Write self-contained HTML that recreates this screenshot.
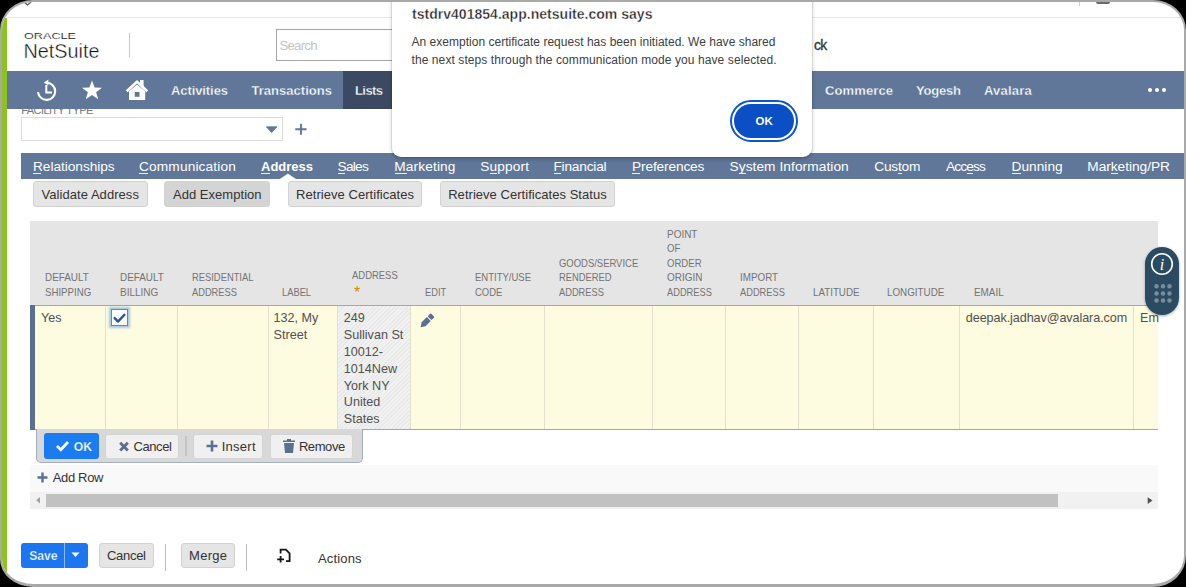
<!DOCTYPE html><html><head><meta charset="utf-8"><style>
html,body{margin:0;padding:0;background:#000;width:1186px;height:587px;overflow:hidden}
.frame{position:absolute;left:0;top:0;width:1186px;height:587px;box-sizing:border-box;border:2px solid #a9a9a9;border-right-width:2.5px;border-bottom-width:3px;border-radius:33px 33px 33px 33px / 30px 30px 31px 28px;background:#fff;overflow:hidden}
.in{position:absolute;left:-2px;top:-2px;width:1186px;height:587px}
.t{position:absolute;white-space:nowrap;line-height:1;font-family:"Liberation Sans",sans-serif}
</style></head><body><div class="frame"><div class="in">
<div style="position:absolute;left:2px;top:18px;width:5px;height:560px;background:#8dc21f"></div>
<div style="position:absolute;left:7px;top:17px;width:1180px;height:1px;background:#e8e8e8"></div>
<svg style="position:absolute;left:0;top:0" width="200" height="70"><text x="24" y="38.9" font-family="Liberation Sans" font-size="9.6" textLength="52" lengthAdjust="spacingAndGlyphs" fill="#222" stroke="#fff" stroke-width="0.12">ORACLE</text><text x="23.5" y="58" font-family="Liberation Sans" font-size="21" textLength="76" lengthAdjust="spacingAndGlyphs" fill="#111" stroke="#fff" stroke-width="0.4">NetSuite</text></svg>
<div style="position:absolute;left:129px;top:33px;width:1px;height:24px;background:#c8c8c8"></div>
<div style="position:absolute;left:276px;top:29px;width:200px;height:32px;box-sizing:border-box;border:1px solid #a5a5a5;background:#fff"></div>
<div class="t" style="left:279.50px;top:39.04px;font-size:13.3px;color:#c4c4c4;letter-spacing:-0.820px;">Search</div>
<div class="t" style="left:814.00px;top:37.65px;font-size:14px;color:#333;letter-spacing:-0.800px;-webkit-text-stroke:0.3px #333;">ck</div>
<div style="position:absolute;left:1095.5px;top:1px;width:14px;height:3px;background:#6a6a6a;border-radius:0 0 2px 2px"></div>
<div style="position:absolute;left:1078.5px;top:2px;width:1px;height:4px;background:#b9d3f0"></div>
<svg style="position:absolute;left:22px;top:0" width="12" height="8"><path d="M2 2 L5.5 5 L9 2" fill="none" stroke="#555" stroke-width="1.3"/></svg>
<div class="t" style="left:21.30px;top:105.09px;font-size:11px;color:#777;letter-spacing:-0.592px;">FACILITY TYPE</div>
<div style="position:absolute;left:7px;top:71px;width:1180px;height:37.5px;background:#607799"></div>
<div style="position:absolute;left:343px;top:71px;width:49px;height:37.5px;background:#3b4a62"></div>
<div class="t" style="left:171.00px;top:84.30px;font-size:13px;color:#fff;font-weight:bold;letter-spacing:-0.089px;-webkit-text-stroke:0.3px #607799;">Activities</div>
<div class="t" style="left:251.50px;top:84.30px;font-size:13px;color:#fff;font-weight:bold;letter-spacing:0.027px;-webkit-text-stroke:0.3px #607799;">Transactions</div>
<div class="t" style="left:355.00px;top:84.30px;font-size:13px;color:#fff;font-weight:bold;letter-spacing:-0.575px;-webkit-text-stroke:0.3px #3b4a62;">Lists</div>
<div class="t" style="left:825.00px;top:84.30px;font-size:13px;color:#fff;font-weight:bold;letter-spacing:0.114px;-webkit-text-stroke:0.3px #607799;">Commerce</div>
<div class="t" style="left:916.00px;top:84.30px;font-size:13px;color:#fff;font-weight:bold;letter-spacing:-0.200px;-webkit-text-stroke:0.3px #607799;">Yogesh</div>
<div class="t" style="left:984.00px;top:84.30px;font-size:13px;color:#fff;font-weight:bold;letter-spacing:0.217px;-webkit-text-stroke:0.3px #607799;">Avalara</div>
<svg style="position:absolute;left:0;top:70" width="170" height="40" viewBox="0 70 170 40">
<g fill="none" stroke="#fff" stroke-width="2.1">
<path d="M38 92.1 A8.6 8.6 0 1 0 46.8 82.7"/>
</g>
<path d="M46.3 85 V92.5 H52" fill="none" stroke="#fff" stroke-width="2"/>
<path d="M43.8 82.6 L48.4 79.6 L48.4 85.6 Z" fill="#fff"/>
<path d="M92 80.5 L94.6 87.6 L102 87.7 L96.1 92.2 L98.3 99.3 L92 95.1 L85.7 99.3 L87.9 92.2 L82 87.7 L89.4 87.6 Z" fill="#fff"/>
<g fill="#fff"><path d="M125.8 90.3 L137 80 L148.2 90.3 L146.4 92.2 L137 83.6 L127.6 92.2 Z"/>
<path d="M129 91.2 L137 84.6 L145.2 91.2 V100 H129 Z"/>
<path d="M140 80 H143.6 V87 L140 83.8 Z"/></g>
<rect x="134.8" y="92" width="4.7" height="4.8" fill="#607799"/>
</svg>
<span style="position:absolute;left:1148.3px;top:88px;width:4px;height:4px;border-radius:50%;background:#fff"></span><span style="position:absolute;left:1154.9px;top:88px;width:4px;height:4px;border-radius:50%;background:#fff"></span><span style="position:absolute;left:1161.5px;top:88px;width:4px;height:4px;border-radius:50%;background:#fff"></span>
<div style="position:absolute;left:21px;top:117px;width:262px;height:23.5px;box-sizing:border-box;border:1px solid #dcdcdc;background:#fff"></div>
<svg style="position:absolute;left:264px;top:125px" width="16" height="10"><path d="M2.3 1.8 H13 L7.65 7.6 Z" fill="#607799" stroke="#607799" stroke-width="0.8" stroke-linejoin="round"/></svg>
<svg style="position:absolute;left:292px;top:121px" width="18" height="18"><path d="M3.3 8.3 H14.6 M9 2.7 V13.7" stroke="#607799" stroke-width="1.9"/></svg>
<div style="position:absolute;left:21px;top:152.5px;width:1163px;height:26.3px;background:#607799"></div>
<svg style="position:absolute;left:278px;top:172px" width="20" height="8"><path d="M2.3 7 L9.9 1.9 L17.5 7 Z" fill="#fff" stroke="#fff" stroke-width="0.6" stroke-linejoin="round"/></svg>
<div class="t" style="left:33.00px;top:159.90px;font-size:13.7px;color:#fff;letter-spacing:-0.042px;">Relationships</div>
<div style="position:absolute;left:33.3px;top:172.6px;width:7.9px;height:1.2px;background:#f0f0f0"></div>
<div class="t" style="left:139.00px;top:159.90px;font-size:13.7px;color:#fff;letter-spacing:0.150px;">Communication</div>
<div style="position:absolute;left:139.3px;top:172.6px;width:9.1px;height:1.2px;background:#f0f0f0"></div>
<div class="t" style="left:261.00px;top:160.00px;font-size:13px;color:#fff;font-weight:bold;">Address</div>
<div style="position:absolute;left:261.3px;top:172.6px;width:8.9px;height:1.2px;background:#f0f0f0"></div>
<div class="t" style="left:337.50px;top:159.90px;font-size:13.7px;color:#fff;letter-spacing:-0.725px;">Sales</div>
<div style="position:absolute;left:337.8px;top:172.6px;width:7.5px;height:1.2px;background:#f0f0f0"></div>
<div class="t" style="left:394.20px;top:159.90px;font-size:13.7px;color:#fff;letter-spacing:0.150px;">Marketing</div>
<div style="position:absolute;left:394.5px;top:172.6px;width:12.0px;height:1.2px;background:#f0f0f0"></div>
<div class="t" style="left:480.20px;top:159.90px;font-size:13.7px;color:#fff;letter-spacing:0.150px;">Support</div>
<div style="position:absolute;left:489.8px;top:172.6px;width:7.4px;height:1.2px;background:#f0f0f0"></div>
<div class="t" style="left:553.40px;top:159.90px;font-size:13.7px;color:#fff;letter-spacing:-0.188px;">Financial</div>
<div style="position:absolute;left:553.7px;top:172.6px;width:6.9px;height:1.2px;background:#f0f0f0"></div>
<div class="t" style="left:632.00px;top:159.90px;font-size:13.7px;color:#fff;letter-spacing:-0.140px;">Preferences</div>
<div style="position:absolute;left:632.3px;top:172.6px;width:7.6px;height:1.2px;background:#f0f0f0"></div>
<div class="t" style="left:729.50px;top:159.90px;font-size:13.7px;color:#fff;letter-spacing:0.076px;">System Information</div>
<div style="position:absolute;left:739.0px;top:172.6px;width:6.6px;height:1.2px;background:#f0f0f0"></div>
<div class="t" style="left:874.20px;top:159.90px;font-size:13.7px;color:#fff;letter-spacing:-0.180px;">Custom</div>
<div style="position:absolute;left:898.4px;top:172.6px;width:3.5px;height:1.2px;background:#f0f0f0"></div>
<div class="t" style="left:945.90px;top:159.90px;font-size:13.7px;color:#fff;letter-spacing:-0.820px;">Access</div>
<div style="position:absolute;left:966.9px;top:172.6px;width:6.6px;height:1.2px;background:#f0f0f0"></div>
<div class="t" style="left:1011.50px;top:159.90px;font-size:13.7px;color:#fff;letter-spacing:0.033px;">Dunning</div>
<div style="position:absolute;left:1011.8px;top:172.6px;width:9.4px;height:1.2px;background:#f0f0f0"></div>
<div class="t" style="left:1087.30px;top:159.90px;font-size:13.7px;color:#fff;letter-spacing:-0.027px;">Marketing/PR</div>
<div style="position:absolute;left:1111.1px;top:172.6px;width:6.5px;height:1.2px;background:#f0f0f0"></div>
<div style="position:absolute;left:33px;top:181px;width:115px;height:25.8px;box-sizing:border-box;border:1px solid #d2d2d2;border-radius:3px;background:#e5e5e5"></div>
<div style="position:absolute;left:164.2px;top:181px;width:105.80000000000001px;height:25.8px;box-sizing:border-box;border:1px solid #d2d2d2;border-radius:3px;background:#d4d4d4"></div>
<div style="position:absolute;left:287.5px;top:181px;width:134.5px;height:25.8px;box-sizing:border-box;border:1px solid #d2d2d2;border-radius:3px;background:#e5e5e5"></div>
<div style="position:absolute;left:439.5px;top:181px;width:175.0px;height:25.8px;box-sizing:border-box;border:1px solid #d2d2d2;border-radius:3px;background:#e5e5e5"></div>
<div class="t" style="left:41.50px;top:187.60px;font-size:13px;color:#333;letter-spacing:0.053px;">Validate Address</div>
<div class="t" style="left:173.00px;top:187.60px;font-size:13px;color:#333;letter-spacing:0.033px;">Add Exemption</div>
<div class="t" style="left:296.00px;top:187.60px;font-size:13px;color:#333;letter-spacing:0.050px;">Retrieve Certificates</div>
<div class="t" style="left:448.20px;top:187.60px;font-size:13px;color:#333;letter-spacing:0.037px;">Retrieve Certificates Status</div>
<div style="position:absolute;left:30px;top:221px;width:1128px;height:84px;background:#e5e5e5"></div>
<div class="t" style="left:44.50px;top:272.19px;font-size:11px;color:#737373;transform:scaleX(0.8994);transform-origin:0 0;">DEFAULT</div>
<div class="t" style="left:44.50px;top:286.69px;font-size:11px;color:#737373;transform:scaleX(0.8783);transform-origin:0 0;">SHIPPING</div>
<div class="t" style="left:119.50px;top:272.19px;font-size:11px;color:#737373;transform:scaleX(0.8994);transform-origin:0 0;">DEFAULT</div>
<div class="t" style="left:119.50px;top:286.69px;font-size:11px;color:#737373;transform:scaleX(0.9100);transform-origin:0 0;">BILLING</div>
<div class="t" style="left:191.50px;top:272.19px;font-size:11px;color:#737373;transform:scaleX(0.8516);transform-origin:0 0;">RESIDENTIAL</div>
<div class="t" style="left:191.50px;top:286.69px;font-size:11px;color:#737373;transform:scaleX(0.8440);transform-origin:0 0;">ADDRESS</div>
<div class="t" style="left:282.00px;top:286.69px;font-size:11px;color:#737373;transform:scaleX(0.8480);transform-origin:0 0;">LABEL</div>
<div class="t" style="left:351.90px;top:269.69px;font-size:11px;color:#737373;transform:scaleX(0.8600);transform-origin:0 0;">ADDRESS</div>
<div class="t" style="left:353.90px;top:284.96px;font-size:16px;color:#d4890a;">*</div>
<div class="t" style="left:424.50px;top:286.69px;font-size:11px;color:#737373;transform:scaleX(0.8446);transform-origin:0 0;">EDIT</div>
<div class="t" style="left:474.50px;top:272.19px;font-size:11px;color:#737373;transform:scaleX(0.8642);transform-origin:0 0;">ENTITY/USE</div>
<div class="t" style="left:474.50px;top:286.69px;font-size:11px;color:#737373;transform:scaleX(0.8585);transform-origin:0 0;">CODE</div>
<div class="t" style="left:558.50px;top:257.69px;font-size:11px;color:#737373;transform:scaleX(0.8599);transform-origin:0 0;">GOODS/SERVICE</div>
<div class="t" style="left:558.50px;top:272.19px;font-size:11px;color:#737373;transform:scaleX(0.8525);transform-origin:0 0;">RENDERED</div>
<div class="t" style="left:558.50px;top:286.69px;font-size:11px;color:#737373;transform:scaleX(0.8440);transform-origin:0 0;">ADDRESS</div>
<div class="t" style="left:666.50px;top:228.69px;font-size:11px;color:#737373;transform:scaleX(0.9048);transform-origin:0 0;">POINT</div>
<div class="t" style="left:666.50px;top:243.19px;font-size:11px;color:#737373;transform:scaleX(0.8700);transform-origin:0 0;">OF</div>
<div class="t" style="left:666.50px;top:257.69px;font-size:11px;color:#737373;transform:scaleX(0.8700);transform-origin:0 0;">ORDER</div>
<div class="t" style="left:666.50px;top:272.19px;font-size:11px;color:#737373;transform:scaleX(0.9054);transform-origin:0 0;">ORIGIN</div>
<div class="t" style="left:666.50px;top:286.69px;font-size:11px;color:#737373;transform:scaleX(0.8440);transform-origin:0 0;">ADDRESS</div>
<div class="t" style="left:739.50px;top:272.19px;font-size:11px;color:#737373;transform:scaleX(0.8944);transform-origin:0 0;">IMPORT</div>
<div class="t" style="left:739.50px;top:286.69px;font-size:11px;color:#737373;transform:scaleX(0.8440);transform-origin:0 0;">ADDRESS</div>
<div class="t" style="left:812.50px;top:286.69px;font-size:11px;color:#737373;transform:scaleX(0.8874);transform-origin:0 0;">LATITUDE</div>
<div class="t" style="left:887.00px;top:286.69px;font-size:11px;color:#737373;transform:scaleX(0.8925);transform-origin:0 0;">LONGITUDE</div>
<div class="t" style="left:973.50px;top:286.69px;font-size:11px;color:#737373;transform:scaleX(0.9000);transform-origin:0 0;">EMAIL</div>
<div style="position:absolute;left:30px;top:305px;width:1128px;height:124.5px;background:#fdfbe0"></div>
<div style="position:absolute;left:30px;top:304.5px;width:1128px;height:1.3px;background:#9aa8bd"></div>
<div style="position:absolute;left:30px;top:429px;width:1128px;height:1.2px;background:#9aa8bd"></div>
<div style="position:absolute;left:337px;top:305.5px;width:73px;height:123.5px;background:repeating-linear-gradient(135deg,#f1f1f1 0 1.8px,#e8e8e8 1.8px 3px)"></div>
<div style="position:absolute;left:105px;top:305.5px;width:1px;height:123.5px;background:#e3e1cc"></div>
<div style="position:absolute;left:177px;top:305.5px;width:1px;height:123.5px;background:#e3e1cc"></div>
<div style="position:absolute;left:267.5px;top:305.5px;width:1px;height:123.5px;background:#e3e1cc"></div>
<div style="position:absolute;left:337px;top:305.5px;width:1px;height:123.5px;background:#e3e1cc"></div>
<div style="position:absolute;left:410px;top:305.5px;width:1px;height:123.5px;background:#e3e1cc"></div>
<div style="position:absolute;left:460px;top:305.5px;width:1px;height:123.5px;background:#e3e1cc"></div>
<div style="position:absolute;left:544px;top:305.5px;width:1px;height:123.5px;background:#e3e1cc"></div>
<div style="position:absolute;left:652px;top:305.5px;width:1px;height:123.5px;background:#e3e1cc"></div>
<div style="position:absolute;left:725px;top:305.5px;width:1px;height:123.5px;background:#e3e1cc"></div>
<div style="position:absolute;left:798px;top:305.5px;width:1px;height:123.5px;background:#e3e1cc"></div>
<div style="position:absolute;left:872.5px;top:305.5px;width:1px;height:123.5px;background:#e3e1cc"></div>
<div style="position:absolute;left:959px;top:305.5px;width:1px;height:123.5px;background:#e3e1cc"></div>
<div style="position:absolute;left:1133px;top:305.5px;width:1px;height:123.5px;background:#e3e1cc"></div>
<div style="position:absolute;left:30px;top:305px;width:4.5px;height:125px;background:#5b6f93"></div>
<div class="t" style="left:41.00px;top:312.33px;font-size:12.6px;color:#505050;">Yes</div>
<div style="position:absolute;left:111px;top:309px;width:17px;height:17px;box-sizing:border-box;border:1.5px solid #4a8ddb;background:#fff;box-shadow:0 0 2px 1.6px rgba(110,165,225,.6)"></div>
<svg style="position:absolute;left:110px;top:308px" width="18" height="18"><path d="M4.7 10.1 L8 13.6 L14.4 6.8" fill="none" stroke="#24589a" stroke-width="2.4" stroke-linecap="round" stroke-linejoin="round"/></svg>
<div class="t" style="left:273.60px;top:312.33px;font-size:12.6px;color:#505050;">132, My</div>
<div class="t" style="left:273.60px;top:329.13px;font-size:12.6px;color:#505050;">Street</div>
<div class="t" style="left:343.80px;top:312.33px;font-size:12.6px;color:#505050;">249</div>
<div class="t" style="left:343.80px;top:329.13px;font-size:12.6px;color:#505050;">Sullivan St</div>
<div class="t" style="left:343.80px;top:345.93px;font-size:12.6px;color:#505050;">10012-</div>
<div class="t" style="left:343.80px;top:362.73px;font-size:12.6px;color:#505050;">1014New</div>
<div class="t" style="left:343.80px;top:379.53px;font-size:12.6px;color:#505050;">York NY</div>
<div class="t" style="left:343.80px;top:396.33px;font-size:12.6px;color:#505050;">United</div>
<div class="t" style="left:343.80px;top:413.13px;font-size:12.6px;color:#505050;">States</div>
<svg style="position:absolute;left:410px;top:305px" width="40" height="30"><ellipse cx="16.3" cy="5.2" rx="2.2" ry="1.3" fill="#fff" transform="rotate(-30 16.3 5.2)"/><g transform="translate(10.6 22.2) rotate(-45)" fill="#5b6f93"><path d="M0 0 L4.2 -2.7 H11.6 V2.7 H4.2 Z"/><rect x="12.7" y="-2.7" width="4.3" height="5.4" rx="0.8"/></g></svg>
<div class="t" style="left:965.80px;top:312.33px;font-size:12.6px;color:#505050;letter-spacing:-0.079px;">deepak.jadhav@avalara.com</div>
<div class="t" style="left:1140.00px;top:312.33px;font-size:12.6px;color:#505050;">Em</div>
<div style="position:absolute;left:1145px;top:247px;width:34px;height:68px;border-radius:17px;background:#2b4b62;box-shadow:0 1px 3px rgba(0,0,0,.35)"></div>
<svg style="position:absolute;left:1145px;top:247px" width="34" height="68"><circle cx="17" cy="17" r="10.3" fill="none" stroke="#fff" stroke-width="1.6"/><text x="17" y="22.5" text-anchor="middle" font-family="Liberation Serif" font-style="italic" font-size="16" fill="#fff">i</text><circle cx="11.5" cy="39.3" r="2.2" fill="#7b8c9c"/><circle cx="11.5" cy="46.5" r="2.2" fill="#7b8c9c"/><circle cx="11.5" cy="53.5" r="2.2" fill="#7b8c9c"/><circle cx="18" cy="39.3" r="2.2" fill="#7b8c9c"/><circle cx="18" cy="46.5" r="2.2" fill="#7b8c9c"/><circle cx="18" cy="53.5" r="2.2" fill="#7b8c9c"/><circle cx="24.5" cy="39.3" r="2.2" fill="#7b8c9c"/><circle cx="24.5" cy="46.5" r="2.2" fill="#7b8c9c"/><circle cx="24.5" cy="53.5" r="2.2" fill="#7b8c9c"/></svg>
<div style="position:absolute;left:36px;top:429px;width:326.5px;height:33.5px;box-sizing:border-box;border:1px solid #a3aec0;border-top:none;border-radius:0 0 5px 5px;background:#d8d8d8"></div>
<div style="position:absolute;left:44.3px;top:433.2px;width:54.5px;height:26.2px;border-radius:3px;background:#1a7cf0"></div>
<svg style="position:absolute;left:55px;top:439px" width="16" height="14"><path d="M2 7 L5.8 10.8 L13 3" fill="none" stroke="#fff" stroke-width="2.8"/></svg>
<div class="t" style="left:73.70px;top:440.67px;font-size:12.2px;color:#fff;font-weight:bold;-webkit-text-stroke:0.25px #1a7cf0;">OK</div>
<div style="position:absolute;left:104.5px;top:433.9px;width:74.9px;height:24.8px;box-sizing:border-box;border:1px solid #d4d4d4;border-radius:3px;background:#f0f0f0"></div>
<div style="position:absolute;left:193.1px;top:433.9px;width:70.20000000000002px;height:24.8px;box-sizing:border-box;border:1px solid #d4d4d4;border-radius:3px;background:#f0f0f0"></div>
<div style="position:absolute;left:270px;top:433.9px;width:83.19999999999999px;height:24.8px;box-sizing:border-box;border:1px solid #d4d4d4;border-radius:3px;background:#f0f0f0"></div>
<div style="position:absolute;left:185px;top:436px;width:2px;height:20px;background:#c4c4c4"></div>
<svg style="position:absolute;left:118px;top:441px" width="12" height="12"><path d="M2.2 1.8 L9.8 9.6 M9.8 1.8 L2.2 9.6" stroke="#5b6f93" stroke-width="2.9"/></svg>
<div class="t" style="left:133.50px;top:440.00px;font-size:13px;color:#333;letter-spacing:-0.420px;">Cancel</div>
<svg style="position:absolute;left:205px;top:439px" width="14" height="14"><path d="M1.5 7 H12.5 M7 1.5 V12.5" stroke="#5b6f93" stroke-width="2.6"/></svg>
<div class="t" style="left:221.70px;top:440.00px;font-size:13px;color:#333;letter-spacing:0.260px;">Insert</div>
<svg style="position:absolute;left:281px;top:437px" width="16" height="18"><path d="M2 3.5 H14 V5 H2 Z M6 2 H10 V3.5 H6 Z" fill="#5b6f93"/><path d="M3 6 H13 L12 16 H4 Z" fill="#5b6f93"/></svg>
<div class="t" style="left:298.90px;top:440.00px;font-size:13px;color:#333;letter-spacing:-0.420px;">Remove</div>
<div style="position:absolute;left:30px;top:465px;width:1128px;height:27px;background:#f9f9f9"></div>
<svg style="position:absolute;left:36px;top:471px" width="14" height="14"><path d="M1.5 6.5 H11.5 M6.5 1.5 V11.5" stroke="#5b6f93" stroke-width="2.4"/></svg>
<div class="t" style="left:52.70px;top:471.40px;font-size:13px;color:#333;letter-spacing:-0.333px;">Add Row</div>
<div style="position:absolute;left:30px;top:492px;width:1128px;height:16.5px;background:#f1f1f1"></div>
<div style="position:absolute;left:46.1px;top:494.2px;width:1011.7px;height:12.7px;background:#c1c1c1"></div>
<svg style="position:absolute;left:34px;top:495px" width="10" height="10"><path d="M6 2 L2.2 5.3 L6 8.6 Z" fill="#a0a0a0"/></svg>
<svg style="position:absolute;left:1146px;top:495px" width="10" height="10"><path d="M1.7 2.2 L6.5 5.6 L1.7 9 Z" fill="#505050"/></svg>
<div style="position:absolute;left:21px;top:542.5px;width:67px;height:25.5px;border-radius:3px;background:#1b76f0"></div>
<div style="position:absolute;left:64px;top:542.5px;width:1px;height:25.5px;background:#8fb8f5"></div>
<div class="t" style="left:29.20px;top:549.67px;font-size:12.2px;color:#fff;font-weight:bold;-webkit-text-stroke:0.25px #1b76f0;">Save</div>
<svg style="position:absolute;left:70px;top:551px" width="12" height="8"><path d="M1.5 1.5 H9.5 L5.5 6 Z" fill="#fff"/></svg>
<div style="position:absolute;left:99px;top:542.5px;width:55px;height:25.5px;box-sizing:border-box;border:1px solid #d2d2d2;border-radius:3px;background:#e5e5e5"></div>
<div class="t" style="left:107.00px;top:549.00px;font-size:13px;color:#333;letter-spacing:-0.300px;">Cancel</div>
<div style="position:absolute;left:165.3px;top:544px;width:1px;height:26.5px;background:#bcbcbc"></div>
<div style="position:absolute;left:181px;top:542.5px;width:53.5px;height:25.5px;box-sizing:border-box;border:1px solid #d2d2d2;border-radius:3px;background:#e5e5e5"></div>
<div class="t" style="left:189.00px;top:549.00px;font-size:13px;color:#333;letter-spacing:0.300px;">Merge</div>
<div style="position:absolute;left:246px;top:544px;width:1px;height:26.5px;background:#bcbcbc"></div>
<svg style="position:absolute;left:274px;top:546px" width="20" height="20"><path d="M6.6 7.4 V3.6 H11.9 L15.6 7.3 V15.2 H12" fill="none" stroke="#141414" stroke-width="1.8"/><path d="M3.2 13.3 H10 M6.6 10.1 V16.5" stroke="#141414" stroke-width="1.8"/></svg>
<div class="t" style="left:318.00px;top:551.80px;font-size:13px;color:#333;letter-spacing:0.150px;">Actions</div>
<div style="position:absolute;left:392px;top:-10px;width:420px;height:167.2px;border-radius:9px;background:#fff;box-shadow:0 0 0 1px rgba(0,0,0,.07), 0 2px 4px rgba(0,0,0,.22)"></div>
<div class="t" style="left:412.00px;top:6.65px;font-size:14px;color:#202124;font-weight:bold;letter-spacing:0.024px;-webkit-text-stroke:0.35px #fff;">tstdrv401854.app.netsuite.com says</div>
<div class="t" style="left:411.50px;top:35.94px;font-size:12px;color:#3c4043;letter-spacing:0.020px;">An exemption certificate request has been initiated. We have shared</div>
<div class="t" style="left:411.50px;top:54.44px;font-size:12px;color:#3c4043;letter-spacing:0.087px;">the next steps through the communication mode you have selected.</div>
<div style="position:absolute;left:730px;top:99.5px;width:68px;height:42.5px;box-sizing:border-box;border-radius:22px;border:2px solid #0b57d0;background:#fff"></div>
<div style="position:absolute;left:734px;top:103.5px;width:60px;height:34.5px;border-radius:18px;background:#0b4fc4"></div>
<div class="t" style="left:755.50px;top:115.97px;font-size:11.5px;color:#fff;font-weight:bold;">OK</div>
</div></div></body></html>
